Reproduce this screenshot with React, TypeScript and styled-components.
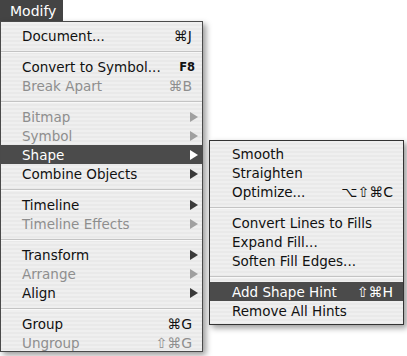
import React from "react";
import styled, { createGlobalStyle, css } from "styled-components";

const Global = createGlobalStyle`
  html, body { margin: 0; padding: 0; background: #ffffff; }
  body { font-family: "DejaVu Sans", "Liberation Sans", sans-serif; }
`;

type Item = {
  label: string;
  shortcut?: string;
  boldShortcut?: boolean;
  sub?: boolean;
  disabled?: boolean;
  active?: boolean;
};

const mainGroups: Item[][] = [
  [{ label: "Document...", shortcut: "⌘J" }],
  [
    { label: "Convert to Symbol...", shortcut: "F8", boldShortcut: true },
    { label: "Break Apart", shortcut: "⌘B", disabled: true },
  ],
  [
    { label: "Bitmap", sub: true, disabled: true },
    { label: "Symbol", sub: true, disabled: true },
    { label: "Shape", sub: true, active: true },
    { label: "Combine Objects", sub: true },
  ],
  [
    { label: "Timeline", sub: true },
    { label: "Timeline Effects", sub: true, disabled: true },
  ],
  [
    { label: "Transform", sub: true },
    { label: "Arrange", sub: true, disabled: true },
    { label: "Align", sub: true },
  ],
  [
    { label: "Group", shortcut: "⌘G" },
    { label: "Ungroup", shortcut: "⇧⌘G", disabled: true },
  ],
];

const subGroups: Item[][] = [
  [
    { label: "Smooth" },
    { label: "Straighten" },
    { label: "Optimize...", shortcut: "⌥⇧⌘C" },
  ],
  [
    { label: "Convert Lines to Fills" },
    { label: "Expand Fill..." },
    { label: "Soften Fill Edges..." },
  ],
  [
    { label: "Add Shape Hint", shortcut: "⇧⌘H", active: true },
    { label: "Remove All Hints" },
  ],
];

const Stage = styled.div`
  position: relative;
  width: 407px;
  height: 356px;
  overflow: hidden;
`;

const TitleTab = styled.div`
  display: flex;
  align-items: center;
  width: 63px;
  height: 21px;
  box-sizing: border-box;
  padding-left: 10px;
  background: #444444;
  color: #ffffff;
  font-size: 14px;
`;

const stripes = css`
  background-color: #ededed;
  background-image: repeating-linear-gradient(
    to bottom,
    #efefef 0px,
    #efefef 2px,
    #e9e9e9 2px,
    #e9e9e9 4px
  );
`;

const MenuPanel = styled.div<{ $variant: "main" | "sub" }>`
  ${stripes};
  box-sizing: border-box;
  display: flex;
  flex-direction: column;
  border: 1px solid #4a4a4a;
  box-shadow: 3px 3px 6px rgba(0, 0, 0, 0.4);
  ${(p) =>
    p.$variant === "main"
      ? css`
          width: 203px;
          padding: 4px 0 0;
          height: 331px;
        `
      : css`
          position: absolute;
          left: 209px;
          top: 140px;
          width: 195px;
          height: 185px;
          padding: 3px 0 0;
          border-color: #333333;
        `}
`;

const Row = styled.div<{ $disabled?: boolean; $active?: boolean; $indent: number }>`
  display: flex;
  align-items: center;
  height: 19px;
  flex: none;
  padding: 0 8px 0 ${(p) => p.$indent}px;
  font-size: 13.5px;
  color: ${(p) => (p.$active ? "#ffffff" : p.$disabled ? "#8e8e8e" : "#111111")};
  background: ${(p) => (p.$active ? "#4b4b4b" : "transparent")};
  white-space: nowrap;
`;

const Label = styled.span`
  flex: 1;
`;

const Shortcut = styled.span<{ $bold?: boolean }>`
  margin-right: ${(p) => (p.$bold ? "-1px" : "2px")};
  font-size: ${(p) => (p.$bold ? "11.5px" : "14px")};
  font-weight: ${(p) => (p.$bold ? 700 : 400)};
`;

const Arrow = styled.span<{ $disabled?: boolean; $active?: boolean }>`
  width: 0;
  height: 0;
  margin-right: -4px;
  border-top: 5px solid transparent;
  border-bottom: 5px solid transparent;
  border-left: 8px solid
    ${(p) => (p.$active ? "#ffffff" : p.$disabled ? "#a0a0a0" : "#3a3a3a")};
`;

const Separator = styled.div`
  height: 12px;
  flex: none;
  display: flex;
  align-items: center;
  &::after {
    content: "";
    display: block;
    width: 100%;
    height: 1px;
    background: #c4c4c4;
    box-shadow: 0 1px 0 #f8f8f8;
  }
`;

function MenuItems({ groups, indent }: { groups: Item[][]; indent: number }) {
  return (
    <>
      {groups.map((g, gi) => (
        <React.Fragment key={gi}>
          {gi > 0 && <Separator />}
          {g.map((it) => (
            <Row key={it.label} $disabled={it.disabled} $active={it.active} $indent={indent}>
              <Label>{it.label}</Label>
              {it.shortcut && <Shortcut $bold={it.boldShortcut}>{it.shortcut}</Shortcut>}
              {it.sub && <Arrow $disabled={it.disabled} $active={it.active} />}
            </Row>
          ))}
        </React.Fragment>
      ))}
    </>
  );
}

export default function App() {
  return (
    <Stage>
      <Global />
      <TitleTab>Modify</TitleTab>
      <MenuPanel $variant="main">
        <MenuItems groups={mainGroups} indent={21} />
      </MenuPanel>
      <MenuPanel $variant="sub">
        <MenuItems groups={subGroups} indent={22} />
      </MenuPanel>
    </Stage>
  );
}
